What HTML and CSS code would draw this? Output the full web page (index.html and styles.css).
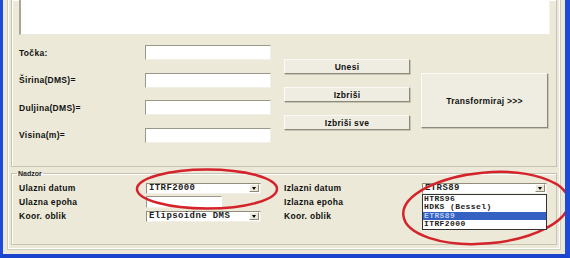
FILE: index.html
```html
<!DOCTYPE html>
<html lang="hr">
<head>
    <meta charset="UTF-8">
    <meta name="viewport" content="width=device-width, initial-scale=1.0">
    <title>Transformacija koordinata</title>
    <link rel="stylesheet" href="styles.css">
</head>
<body>

    <div class="window">
        <div class="panel">

            <!-- unos tocaka -->
            <div class="group group-main">
                <div class="textarea"></div>

                <div class="middle">
                    <div class="fields">
                        <label class="lbl">Točka:</label>
                        <div class="input"></div>
                        <label class="lbl">Širina(DMS)=</label>
                        <div class="input"></div>
                        <label class="lbl">Duljina(DMS)=</label>
                        <div class="input"></div>
                        <label class="lbl">Visina(m)=</label>
                        <div class="input"></div>
                    </div>

                    <div class="buttons">
                        <button class="btn">Unesi</button>
                        <button class="btn">Izbriši</button>
                        <button class="btn">Izbriši sve</button>
                    </div>

                    <button class="btn btn-transform">Transformiraj &gt;&gt;&gt;</button>
                </div>
            </div>

            <!-- nadzor -->
            <fieldset class="group group-nadzor">
                <legend>Nadzor</legend>
                <div class="nadzor-grid">
                    <span class="lbl">Ulazni datum</span>
                    <div class="combo"><span>ITRF2000</span><i class="arrow"></i></div>
                    <span class="lbl">Izlazni datum</span>
                    <div class="combo combo-open">
                        <span>ETRS89</span><i class="arrow"></i>
                        <ul class="list">
                            <li>HTRS96</li>
                            <li>HDKS (Bessel)</li>
                            <li class="selected">ETRS89</li>
                            <li>ITRF2000</li>
                        </ul>
                    </div>

                    <span class="lbl">Ulazna epoha</span>
                    <div class="input epoha"></div>
                    <span class="lbl">Izlazna epoha</span>
                    <div class="input epoha"></div>

                    <span class="lbl">Koor. oblik</span>
                    <div class="combo"><span>Elipsoidne DMS</span><i class="arrow"></i></div>
                    <span class="lbl">Koor. oblik</span>
                    <!-- hidden under the open list -->
                    <div class="combo"><span></span><i class="arrow"></i></div>
                </div>
            </fieldset>

        </div>

        <!-- crvene oznake preko slike -->
        <svg class="marks" width="570" height="258" viewBox="0 0 570 258">
            <ellipse cx="207" cy="189" rx="70" ry="19.5" />
            <ellipse cx="486" cy="208" rx="83" ry="35.5" transform="rotate(-5 486 208)" />
        </svg>
    </div>

</body>
</html>
```

FILE: styles.css
```css
/* General styling */
body {
    margin: 0;
    font-family: 'Liberation Sans', Arial, sans-serif;
}

/* XP window frame, top is cut off */
.window {
    position: relative;
    width: 570px;
    height: 258px;
    box-sizing: border-box;
    background-color: #ece9d8;
    border-left: 3px solid #1d4ad6;
    border-right: 5px solid #1d4ad6;
    border-bottom: 4px solid #1b44cc;
    overflow: hidden;
}

.panel {
    margin: 0 4px 0 4px;
    height: 250px;
    box-sizing: border-box;
    padding: 0 3px;
    border: 1px solid #cfccbb;
    border-top: none;
    box-shadow: inset 1px 0 0 #fff, inset -1px -1px 0 #fff;
}

.group {
    border: 1px solid #c6c3b2;
    box-shadow: inset 1px 1px 0 #fff;
}

.group-main {
    border-top: none;
    padding: 0 6px 23px 7px;
}

.textarea {
    height: 35px;
    box-sizing: border-box;
    background: #fff;
    border-left: 2px solid #a9a798;
    border-bottom: 1px solid #ece9d8;
    border-right: 1px solid #f4f3ee;
}

.middle {
    display: flex;
    margin-top: 10px;
}

.fields {
    display: grid;
    grid-template-columns: 126px 126px;
    grid-auto-rows: 15px;
    row-gap: 12.5px;
    align-items: center;
}

.lbl {
    font-size: 8.5px;
    font-weight: bold;
    letter-spacing: 0.3px;
    color: #111;
    white-space: nowrap;
}

.input {
    height: 15px;
    box-sizing: border-box;
    background: #fff;
    border: 1px solid;
    border-color: #9a9889 #f1efe6 #f1efe6 #9a9889;
}

.buttons {
    display: flex;
    flex-direction: column;
    gap: 13px;
    padding-top: 14px;
    margin-left: 13px;
}

.btn {
    width: 126px;
    height: 15px;
    padding: 0;
    box-sizing: border-box;
    background-color: #efede2;
    border: 1px solid;
    border-color: #fbfaf6 #8c8a7b #8c8a7b #fbfaf6;
    box-shadow: 1px 1px 0 #c8c5b5;
    font-family: 'Liberation Sans', Arial, sans-serif;
    font-size: 8.5px;
    font-weight: bold;
    letter-spacing: 0.3px;
    color: #111;
}

.btn-transform {
    width: 127px;
    height: 55px;
    margin: 28px 0 0 11px;
}

/* Nadzor */
.group-nadzor {
    margin: 2px 0 0 0;
    padding: 5px 0 22px 7px;
    min-width: 0;
}

.group-nadzor legend {
    padding: 0 1px;
    margin-left: -2px;
    font-size: 7px;
    font-weight: bold;
    color: #222;
    line-height: 9px;
}

.nadzor-grid {
    display: grid;
    grid-template-columns: 127px 138px 138px 125px;
    grid-auto-rows: 11px;
    row-gap: 3px;
    align-items: center;
}

.combo {
    position: relative;
    display: flex;
    align-items: center;
    width: 115px;
    height: 11px;
    box-sizing: border-box;
    background: #fff;
    border: 1px solid;
    border-color: #8f8d7e #f1efe6 #f1efe6 #8f8d7e;
    font-family: 'Liberation Mono', 'Courier New', monospace;
    font-size: 9px;
    font-weight: bold;
    letter-spacing: 0.4px;
    color: #222;
    padding-left: 2px;
}

.combo span {
    flex: 1;
    line-height: 9px;
}

.arrow {
    width: 10px;
    height: 8px;
    margin-right: 1px;
    box-sizing: border-box;
    background: #ece9d8;
    border: 1px solid;
    border-color: #fff #8c8a7b #8c8a7b #fff;
    position: relative;
}

.arrow::after {
    content: "";
    position: absolute;
    left: 2px;
    top: 2px;
    border-left: 2.5px solid transparent;
    border-right: 2.5px solid transparent;
    border-top: 3px solid #000;
}

.combo-open {
    width: 125px;
}

.epoha {
    width: 76px;
    height: 12px;
    border-right-color: #fff;
}

.list {
    position: absolute;
    top: 10px;
    left: -1px;
    z-index: 2;
    width: 125px;
    margin: 0;
    padding: 0;
    list-style: none;
    background: #fff;
    border: 1px solid #333;
    box-sizing: border-box;
}

.list li {
    height: 8.5px;
    line-height: 8.5px;
    font-size: 8px;
    padding-left: 1px;
    color: #222;
    overflow: hidden;
}

.list .selected {
    background-color: #3461c2;
    color: #b9cdf5;
}

.marks {
    position: absolute;
    top: 0;
    left: -3px;
    pointer-events: none;
}

.marks ellipse {
    fill: none;
    stroke: #d4232a;
    stroke-width: 2.5;
}
```
